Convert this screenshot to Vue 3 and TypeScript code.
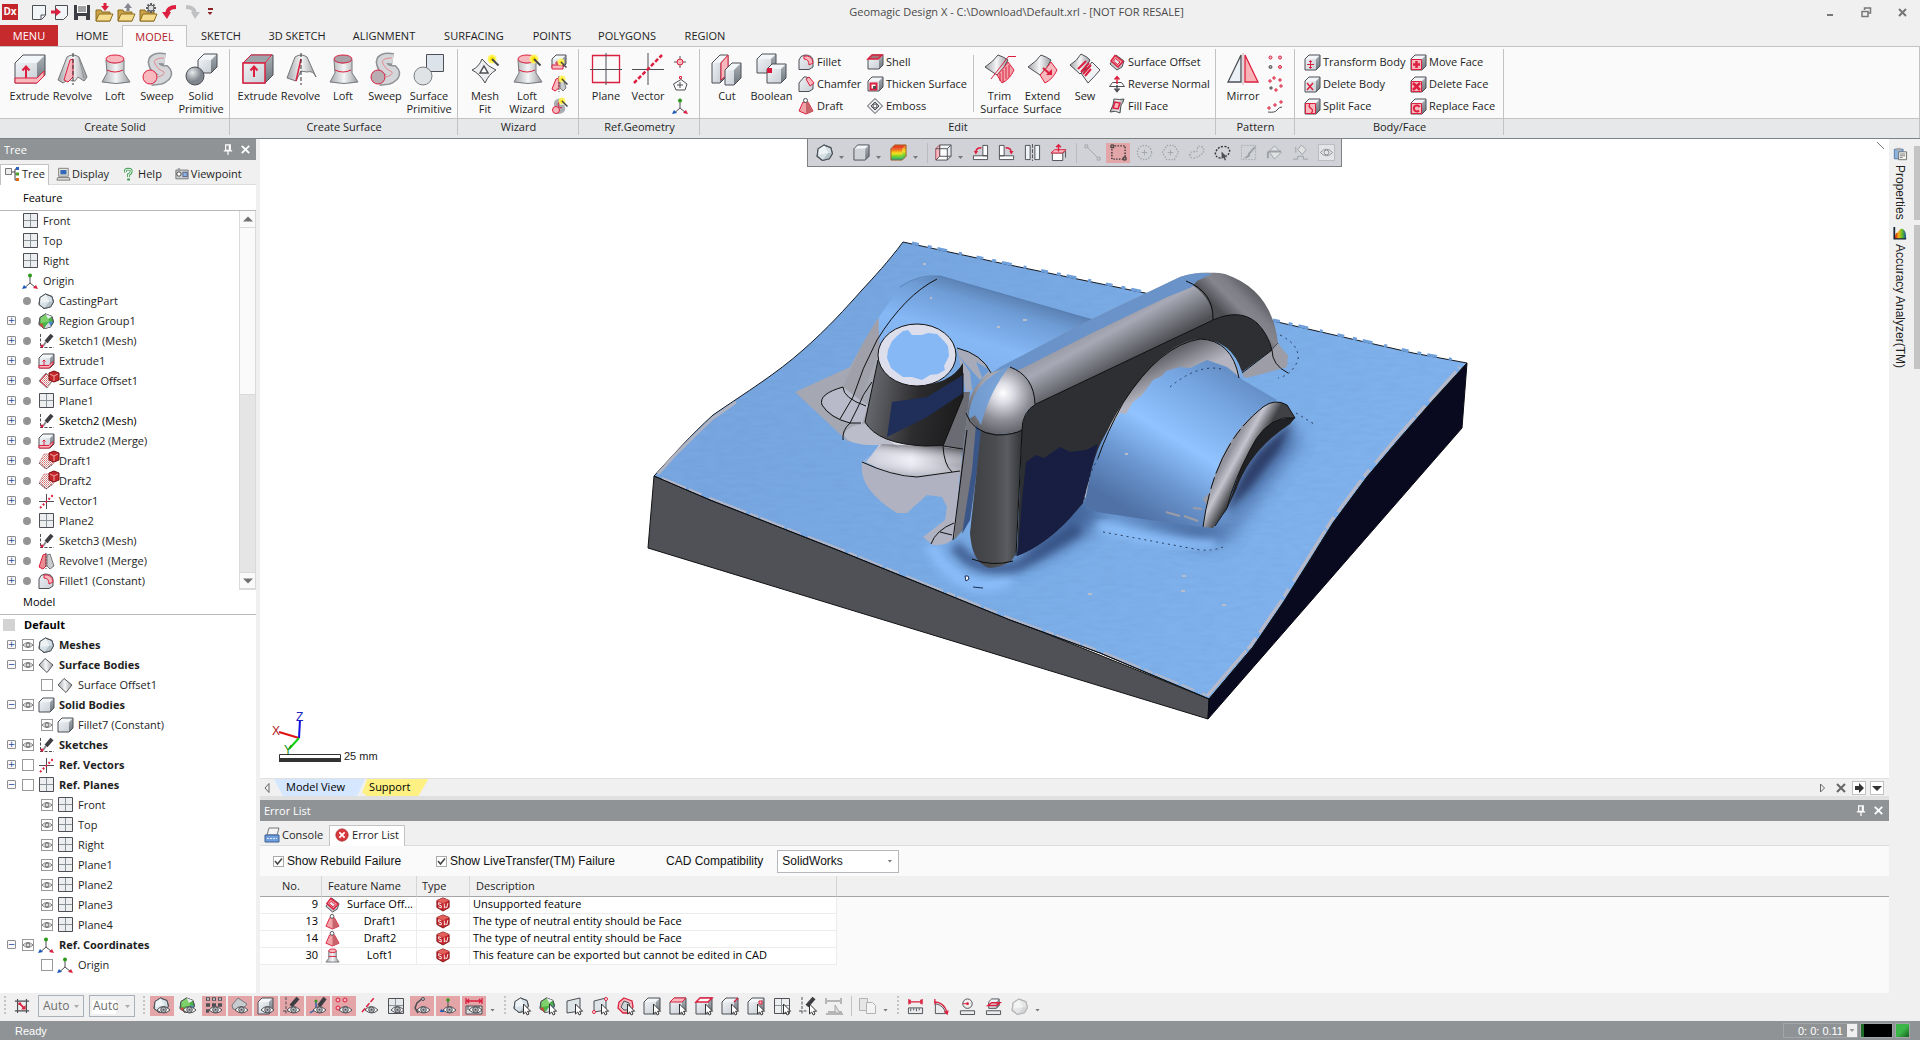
<script setup lang="ts">
import { h, ref } from 'vue'

const K = '#4d4f54'
const R = '#dc1f3f'
const P = '#f7b9bd'

const box = (x: number, y: number, w: number, t: number, d: number, front = 'url(#lt)', side = 'url(#sd)', st = K, top = '#f3f6f8') =>
  `<path d="M${x} ${y + d}l${d} ${-d}h${w}l${-d} ${d}z" fill="${top}"/><path d="M${x} ${y + d}h${w}v${t}h${-w}z" fill="${front}"/><path d="M${x + w} ${y + d}l${d} ${-d}v${t}l${-d} ${d}z" fill="${side}"/><path d="M${x} ${y + d}l${d} ${-d}h${w}v${t}l${-d} ${d}h${-w}z" fill="none" stroke="${st}"/>`
const line = (d: string, c = K, w = 1, extra = '') => `<path d="${d}" fill="none" stroke="${c}" stroke-width="${w}" ${extra}/>`
const fill = (d: string, f: string, c = 'none', w = 1) => `<path d="${d}" fill="${f}" stroke="${c}" stroke-width="${w}"/>`
const dot = (x: number, y: number, r: number, f: string, c = 'none') => `<circle cx="${x}" cy="${y}" r="${r}" fill="${f}" stroke="${c}"/>`

const wand = (x: number, y: number, r = 4.5) => `<circle cx="${x}" cy="${y}" r="${r}" fill="#fff45c" opacity=".9"/><circle cx="${x}" cy="${y}" r="${r - 2}" fill="#ffe600"/>` + line(`M${x} ${y}l${r + 2} ${r + 2}`, '#45464a', r > 4 ? 2 : 1.5)
const eye = fill('M4 13q6-7 13 0q-6 6-13 0z', '#fff', K) + dot(10.5, 12.7, 2.8, '#b5b8bc', K) + dot(10.5, 12.7, 1, K)
const cur = fill('M10.5 7v10l2.2-2 1.5 3 1.8-1-1.4-2.8h3z', '#fff', '#333', 1)
const poly16 = (a = '#eef4f6', b = '#d5e0e6', c = '#b3c0c8', st = '#50555b') =>
  fill('M7.5 1 14 3.5 15.5 9 12.5 14 6 15.5 1 11.5 2 4.5z', b, st, 1) + fill('M7.5 1 11.5 8.5 3 10 2 4.5z', a) + fill('M11.5 8.5 15.5 9 12.5 14 6 15.5z', c) + line('M7.5 1 14 3.5 15.5 9 12.5 14 6 15.5 1 11.5 2 4.5z', st)
const region = poly16('#7ed06a', '#4cb447', '#4a8ed6') + fill('M6 15.5 10.5 9.5 13 13.5z', '#d9dde0') + fill('M7.5 1 14 3.5 10 6z', '#eceff1') + fill('M1 11.5 4 10 6 15.5z', '#cf4a3c')
const planeS = fill('M1.5 1.5h14v14h-14z', '#eceef0', K) + line('M8.5 2v13M2 8.5h13', '#8a9299')
const pen = line('M14 2 8 9', '#3d3e42', 4) + line('M8 9 5 13', '#8a8c90', 2)
const sketch = line('M2.5 1v14M2 14.5h14', K, 1, 'stroke-dasharray="3 1.500"') + pen + dot(4, 13, 1.5, R)
const coord = line('M8 2.5V10', K) + line('M8 10 3 14.5M8 10l5.5 4.5', K) + dot(8, 2.5, 2, '#2e9a1c') + fill('M0 16l2-4 3 3z', '#1957b8') + fill('M16 16l-2-4-3 3z', R)
const swb = (x: number, y: number, s: number) => fill(`M${x} ${y + 2}l${s / 2} -2 ${s / 2} 2v${s - 3}l${-s / 2} 2 ${-s / 2} -2z`, '#c3262b', '#7d1013') + line(`M${x + 1} ${y + 3}l${s / 2 - 1} 2 ${s / 2 - 1} -2M${x + s / 2} ${y + 5}v${s - 5}`, '#f2a6a2', 1)
const diamond = (f = 'url(#mt)', st = '#56585c') => fill('M7 1.5 15 8 9 15.5 1 8z', f, st)
const revolve = (half: string) => fill('M10 4q6-4 12 0l8 20-3 4-6-4-3 4h-3l-3-2-6 4-5-3z', 'url(#mt)', '#777') + fill('M13 7 16 6v18l-5 5-4-2z', half, R) + line('M16 0v32', '#333', 1, 'stroke-dasharray="4 2"') + line('M22 5l5 20', '#8c8f93')
const loft = (f: string) => fill('M7 7q8 6 18 0l0 13 6 9q-14 3-28 0l5-9z', 'url(#mt)', '#77797d') + `<ellipse cx="16" cy="6" rx="9" ry="4" fill="${f}" stroke="${R}"/>` + line('M8 17q8 4 16 0', R)
const sweep = (f: string) => line('M24 6q-13-2-11 5t11 7q4 4-5 8l-9 1', '#8f9296', 12) + line('M24 6q-13-2-11 5t11 7q4 4-5 8l-9 1', '#d4d6d9', 9) + line('M23 5q-12 0-9 6t9 8q1 3-6 5', '#e58a93') + dot(9, 24, 7, f, R)
const cells = (body: string, f: string) => box(1, 1, 11, 11, 4, 'url(#lt)', 'url(#sd)', K) + (f ? fill('M1.5 5.5h10v10h-10z', f, R) : '') + body
const folder = fill('M1 7h5l1 2h8v9H1z', '#caa34a', '#8c6c1d') + fill('M1 18 4 11h14l-3 7z', '#f6dc8e', '#8c6c1d')

type Icon = [number, string]
const icons: Record<string, Icon> = {
  extrude: [32, box(1, 2, 22, 20, 8) + fill('M1 25h22l7-7v5l-7 7H1z', P, R) + line('M12 25V14M8.5 17.5 12 13.5l3.5 4', R, 2)],
  extrudeS: [32, box(1, 2, 22, 20, 8) + fill('M1 10 9 2h21l-7 8z', '#9da3a8', R) + fill('M1 10h22v20H1z', 'url(#lt)', R, 1.5) + line('M12 24V14M8.5 17.5 12 13.5l3.5 4', R, 2)],
  revolve: [32, revolve(P)],
  revolveS: [32, fill('M10 4q6-4 12 0l9 20q-3-7-9-5l-6-1-5 10-9-3z', 'url(#mt)', '#777') + line('M16 6 11 28', R, 1.5) + line('M16 0v32', '#333', 1, 'stroke-dasharray="4 2"')],
  loft: [32, loft(P)],
  loftS: [32, loft('#a9a2a6')],
  loftW: [32, loft(P) + wand(23, 6)],
  sweep: [32, sweep(P)],
  sweepS: [32, sweep('#b9adb1')],
  solidPrim: [32, box(13, 1, 13, 13, 6) + dot(10, 23, 9, 'url(#ball)', K)],
  surfPrim: [32, fill('M13.5 1.5h17v17h-17z', '#dde3ea', K) + dot(10, 23, 9, '#dfe3e6', '#7b7d80')],
  meshFit: [32, fill('M3 17q7-3 10-11 6 8 14 11-7 4-11 13-5-9-13-13z', '#eceef0', K) + fill('M15 13l4 7h-8z', '#fff', K, 1.5) + wand(23, 6)],
  plane: [32, line('M2.5 2.5h27v27h-27z', R, 1.3) + line('M16 0v32M0 16.5h32', K)],
  vector: [32, line('M16 0v32M0 16.5h32', K) + line('M2 30 30 2', R, 2.5, 'stroke-dasharray="4 2"')],
  cut: [32, box(1, 2, 8, 20, 8) + fill('M10 10l7-8v19l-7 6z', P, R) + box(14, 10, 9, 15, 7)],
  boolean: [32, box(1, 1, 14, 14, 5) + box(11, 11, 14, 14, 5) + fill('M11 15h5v5h-5z', '#d9173a')],
  trim: [32, fill('M1 14Q10 8 14 2q6 2 10 5-3 8-11 15z', 'url(#mt)', K) + fill('M13 22Q20 15 24 9l6 8q-4 9-12 13z', '#f3a1a8', R) + line('M16 20v8M19 17v12M22 14v12M25 12v12', R) + line('M7 26 24 4M24 3.5h8', R)],
  extend: [32, fill('M1 14Q10 8 14 2q6 2 10 5-3 8-11 15z', 'url(#mt)', K) + fill('M13 22Q20 15 24 9l6 8q-4 9-12 13z', P, R) + line('M16 15l7 6', R, 2) + fill('M25 22v-6l-6 6z', R)],
  sew: [32, fill('M1 12Q8 8 12 1q7 3 9 6-3 9-10 14z', 'url(#mt)', K) + fill('M12 20Q20 15 23 9l8 8q-5 6-12 13z', '#f1f2f4', K) + line('M9 16l8-8M12 19l8-9M14 21l8-9M16 23l6-7', R, 2)],
  mirror: [32, fill('M14 2v27H1z', '#eaf2f8', K, 1.3) + fill('M18 2v27h13z', '#f7b3b6', R, 1.3) + line('M16 0v32', '#c7adb0')],
  wiz1: [16, box(1, 1, 10, 9, 4) + fill('M1 11h11v4H1z', P, R) + line('M6 11V7M4 9h4', R) + wand(10, 8, 3.5)],
  wiz2: [16, fill('M5 3 8 2v10l-4 3-3-2z', P, R) + fill('M9 3l3-1 3 10-3 3-3-3z', '#c9cccf', '#777') + line('M8 0v16', '#555', 1, 'stroke-dasharray="2 1"') + wand(11, 3, 3.5)],
  wiz3: [16, line('M12 3Q5 3 6 7t5 3q1 3-5 3', '#a9acb0', 6) + line('M11 3Q6 4 7 7t4 3', R) + dot(5, 12, 3.5, P, R) + wand(11, 3, 3.5)],
  point: [16, line('M8 2v12M2 8h12', K) + dot(8, 8, 3, P, R)],
  polyPt: [16, fill('M9 3.5 15 8l-2 6H4L1.5 8z', 'none', K) + line('M8 6v6M5 9h6', K) + fill('M7.5.5h2v2h-2z', '#fff', R)],
  coord: [16, coord],
  fillet: [16, fill('M1 6Q2 1.5 7 1q8 0 8 6v6l-4 2.5H1z', 'url(#lt)', K) + fill('M6 2q8-1 9 7l-4 2q0-6-5-6z', P, R)],
  chamfer: [16, fill('M1 7 6 1h3l6 6v6l-4 2.5H1z', 'url(#lt)', K) + fill('M8 3l3-2 5 6-4 3z', P, R)],
  draft: [16, fill('M5 4h5l5 9-7 3-7-3z', '#f0a4a8', R) + fill('M8 5l2-1 5 9-7 3z', '#c9636a') + dot(7.5, 2.5, 2, '#fff', K)],
  shell: [16, box(1, 1, 11, 10, 4) + fill('M1 5l4-4h10l-4 4z', '#a0747a', R, 1.5)],
  thicken: [16, box(1, 1, 11, 10, 4) + fill('M3.5 7.5h6v6h-6z', '#fff', R, 2) + fill('M6 10h3v3h-3z', K)],
  emboss: [16, fill('M8 .5 15.5 8 8 15.5.5 8z', '#eceeef', K) + fill('M8 4l4 4-4 4-4-4z', '#d5d8da', K) + dot(8, 8, 2, '#fff', K)],
  soffset: [16, fill('M7 1l8 6-2 6-5 3-7-6z', '#c6c8cc', K) + fill('M6 1.5 14 7.5 9 13 2 7z', '#f2a7ad', R, 1.5) + fill('M6.5 4.5 11 8 8.5 10.5 4.5 7z', '#e4e5e7', R)],
  reverse: [16, fill('M3.5 6.5h9l3 4H.5z', '#fff', K) + line('M8 8V1M5.5 3.5 8 .7l2.5 2.8', R, 1.5) + line('M8 9v6M5.5 12.5 8 15.5l2.5-3', K, 1.5)],
  fillFace: [16, fill('M5 1q6 1 10 0-1 4-3 6l-1 8Q7 12 1 14L4 7z', 'url(#mt)', K) + fill('M6 4l5 1-2 6-5-1z', P, R, 1.5)],
  pat1: [16, dot(3.5, 3.5, 1.5, P, R) + dot(13, 3.5, 1.5, P, R) + dot(3.5, 13, 1.5, '#aaa', K) + dot(13, 13, 1.5, P, R)],
  pat2: [16, dot(3, 5, 1.2, P, R) + dot(7, 2, 1.2, P, R) + dot(13, 4, 1.2, P, R) + dot(4, 12, 1.2, '#aaa', K) + dot(14, 10, 1.2, P, R) + dot(9, 14, 1.2, P, R)],
  pat3: [16, line('M1 14q7 1 9-2t5-3', K) + dot(2, 10, 1.2, P, R) + dot(8, 7, 1.2, P, R) + dot(14, 4, 1.2, P, R)],
  tbody: [16, cells(line('M6.5 7v7M3 10.5h7M5 8l1.5-1.5L8 8M5 13l1.5 1.5L8 13', R), '')],
  dbody: [16, cells(line('M3 7l6 7M9 7l-6 7', R, 1.5), '')],
  sface: [16, cells(line('M6 5.5q-2 3 1 5t0 5', R, 1.3), P)],
  mface: [16, cells(line('M6.5 7v7M3 10.5h7', R, 2.5), P)],
  dface: [16, cells(line('M3 7l7 7M10 7l-7 7', R, 2.5), P)],
  rface: [16, cells(line('M9 12.5A3 3 0 1 1 9.5 9', R, 2), P)],
  mesh: [16, poly16()],
  region: [16, region],
  sketch: [16, sketch],
  ext16: [16, box(1, 1, 11, 10, 4) + fill('M1 12.5h10l4-4V11l-4 4H1z', P, R) + line('M6 12V7M4.5 8.5 6 7l1.5 1.5', R)],
  surfx: [22, fill('M8 3l7 7-6 8-8-7z', 'url(#dither)', '#888', 1) + line('M8 4 2 11l7 6', R) + swb(11, 1, 10)],
  draftx: [22, fill('M6 4h5l5 9-8 6-7-6z', 'url(#dither)', '#e1a1a5', 1) + line('M1 13l7 6 7-5', K, 1, 'stroke-dasharray="2 1"') + swb(11, 1, 10)],
  planeS: [17, planeS],
  vecS: [16, line('M8.5 1v15M1 8.5h15', K) + line('M2 15 15 2', R, 2, 'stroke-dasharray="2 2"')],
  rev16: [16, fill('M5 2 8 1v12l-3 3-4-2z', '#e98d92', R) + fill('M9 2l3-1 4 12-4 3-3-3z', '#c9cccf', '#777') + line('M8 0v16', '#555', 1, 'stroke-dasharray="2 1"')],
  surf: [16, diamond()],
  solid: [16, box(1, 1, 11, 10, 4)],
  loft16: [16, fill('M4 3h8v8l3 4H1l3-4z', 'url(#mt)', '#77797d') + `<ellipse cx="8" cy="3" rx="4" ry="2" fill="${P}" stroke="${R}"/>` + line('M4 9h8', R)],
  sw: [16, fill('M1 4 8 1l7 3v8l-7 4-7-4z', '#c3262b', '#7d1013') + fill('M1 4 8 1l7 3-7 3z', '#e2605c') + line('M6 7.5 3 6.5V9l3 1v2.5l-3-1M9.5 7.5v5l1.5-1 1.5.5 1-5', '#fff', 1)],
  error: [16, dot(8, 8, 7, '#d8383b', '#a82a2d') + line('M5 5l6 6M11 5l-6 6', '#fff', 2)],
  console: [16, fill('M3 8 5 1h10l-2 7z', '#f2f4f6', '#777') + fill('M1 8h14v7H1z', '#6f9fdc', '#3c5f96') + line('M3 11.5h10', '#dfe9f7', 1, 'stroke-dasharray="2 1"')],
  treeTab: [16, fill('M1.5 2.5h6v6h-6z', '#eee', '#777') + line('M8 6h3M13 3h-2v11h2M11 8h2', '#444') + fill('M12 1h3v3h-3z', '#2e62c0') + fill('M12 6.5h3v3h-3z', '#49a32a') + fill('M12 12h3v3h-3z', '#dc6a15')],
  display: [16, fill('M3 1.5h11v9H3z', '#e7e5dc', '#777') + fill('M5 3.5h7v5H5z', '#3168b8') + fill('M2 12h13l1 3H1z', '#d8d8d2', '#777')],
  help: [16, line('M4 6Q3 2.500 7 2.500T10.500 5Q10.500 7 7.500 8.500v3M7.500 13v2.500', '#3f9a52', 3.2) + line('M4 6Q3 2.500 7 2.500T10.500 5Q10.500 7 7.500 8.500v3', '#e2f5e4', 1.2)],
  view: [16, fill('M1 3.5h14v10H1z', '#cfd0d2', '#6d6e70') + dot(4.5, 8, 2.5, '#fff', '#333') + fill('M9 6h5v5H9z', '#86b2e4', '#557') + fill('M3 1.5h3v2H3z', '#999')],
  solidv: [18, box(1, 1, 12, 12, 4, '#cfd2d6')],
  heat: [18, box(1, 1, 12, 12, 4, 'url(#heat)', 'url(#heat)', '#a55c1c', '#e8441f')],
  wire: [18, box(1, 1, 12, 12, 4, '#fff', '#e9ecef') + fill('M1 5l4-4v12l-4 4z', P, R, 0.5) + line('M5 1v12h12M5 13l-4 4M1 5h12v12M13 5l4-4', K)],
  rotL: [18, fill('M11.5 1.5h5v11h-5zM1.5 12.5h15v4h-15z', '#fff', K) + line('M10 4Q4 4 4 9', R, 1.5) + fill('M2 7.5h4.500L4 11z', R)],
  rotR: [18, fill('M1.5 1.5h5v11h-5zM1.5 12.5h15v4h-15z', '#fff', K) + line('M8 4q6 0 6 5', R, 1.5) + fill('M12 7.5h4.500L14 11z', R)],
  flip: [18, fill('M1.5 1.5h5v15h-5zM11.5 1.5h5v15h-5z', '#eef4f8', K) + line('M9 0v18', K, 1, 'stroke-dasharray="4 1.500"')],
  normal: [18, fill('M2.5 9.5h11v8h-11z', '#fff', K) + line('M13.500 9.500l3-2v7', K) + fill('M1 9.500 5 6h12l-4 3.500z', P, R) + line('M9 8V1M6.5 3.5 9 .8l2.5 2.7', R, 1.5)],
  gline: [18, line('M2 2l14 14', '#a2a6a9') + fill('M1 1h3v3H1zM14 14h3v3h-3z', '#d0d3d7', '#a2a6a9')],
  rsel: [18, line('M2 2h14v14H2z', '#333', 1.5, 'stroke-dasharray="1.500 1.500"') + fill('M1 1h3v3H1zM14 14h3v3h-3z', '#a88', '#333')],
  gcirc: [18, `<circle cx="9" cy="9" r="7.500" fill="none" stroke="#a2a6a9" stroke-width="1.500" stroke-dasharray="1.500 1.500"/>` + line('M9 6v6M6 9h6', '#a2a6a9')],
  ghex: [18, line('M5 1.5h8l4.5 7.5-4.5 7.5H5L.5 9z', '#a2a6a9', 1.5, 'stroke-dasharray="1.500 1.500"') + line('M9 6v6M6 9h6', '#a2a6a9')],
  gfree: [18, line('M2 12q0-4 4-4 4 1 4-3t5-2q4 4-1 8-3 3-8 4-4 0-4-3z', '#a2a6a9', 1.5, 'stroke-dasharray="1.500 1.500"')],
  lasso: [18, line('M7 15Q1 14 1.5 9 4 3 10 2.5q7 0 6.5 6-1 3-4 4', '#333', 1.5, 'stroke-dasharray="2 1.500"') + fill('M8 8v8l2-1.5 1.5 3 1.3-.6-1.3-2.9H14z', K)],
  gbrush: [18, line('M1.5 1.5h15v15h-15z', '#a2a6a9', 1, 'stroke-dasharray="1.500 1.500"') + line('M16 3l-7 8', '#9da1a5', 2) + fill('M9 10l2 2q-2 4-8 3 4-1 6-5z', '#9da1a5')],
  gbucket: [18, fill('M3 8l6-6 7 7-7 7z', '#dfe1e3', '#9da1a5') + line('M2 8v7M3 8h13', '#9da1a5', 2)],
  gsmart: [18, fill('M6 6l4-5 5 5-4 5z', '#dfe1e3', '#9da1a5') + line('M1 16h5v-3h6v3h5M4 3v6', '#9da1a5')],
  geye: [18, fill('M.5.5h17v17H.5z', '#e3e4e6', '#b7babd') + line('M2.5 9q6.5-7 13 0-6.5 7-13 0z', '#8d9195') + dot(9, 9, 2.5, 'none', '#8d9195')],
  crop: [18, line('M4 1v16M14 1v16M1 3.5h16M1 14.5h16', K, 1.3) + line('M6 6l6 6', R, 2) + fill('M13 13V8l-5 5zM5 5h3v3H5z', R)],
  eMesh: [18, poly16() + eye], eRegion: [18, region + eye],
  eCloud: [18, line('M1 2h4M7 2h4M13 2h4M1 8h4M7 8h4M13 8h4M1 14h3', K, 3.5) + line('M2 2h2M8 2h2M14 2h2', '#ddd', 1.5) + eye],
  eSurf: [18, fill('M7 1 16 7l-5 6-9-1-1-4z', '#c8ccd0', '#77797d') + eye],
  eSolid: [18, box(1, 1, 11, 12, 4) + eye],
  eSketch: [18, line('M3 0v18M0 14h8', K, 1, 'stroke-dasharray="3 1.500"') + line('M15 1 8 9', '#3d3e42', 4) + eye],
  eSk3: [18, line('M7 3v9L1 16', '#2b62ad', 1.5) + line('M16 1l-6 8', '#3d3e42', 4) + dot(7, 4, 1.5, '#2e9a1c') + eye],
  ePts: [18, dot(3, 3, 2, P, R) + dot(10, 3, 2, P, R) + dot(3, 11, 2, P, R) + eye],
  eVec: [18, line('M1 15 13 1', R, 1.5, 'stroke-dasharray="5 1.500"') + eye],
  ePlane: [18, fill('M1.5 1.5h15v15h-15z', '#e6e9eb', K) + line('M8.5 2v14M2 8.5h14', '#8a9299') + eye],
  eCurve: [18, line('M10 1 4 6l-2 5 3 5', K, 1.5) + dot(10, 2, 1.5, '#ccc', K) + eye],
  eCoord: [18, line('M9 3v9', K) + dot(9, 3, 1.8, '#2e9a1c') + fill('M1 15l1-3 4 3z', '#1957b8') + eye],
  eDim: [18, line('M1 1v6M17 1v6M1 4h16M4 2 2 4l2 2M14 2l2 2-2 2', R, 1.3) + fill('M1 9h16v8H1z', '#ddd', K) + line('M3 9v4M14 9v4', K) + eye],
  cMesh: [18, poly16() + cur], cRegion: [18, region + cur],
  cFace: [18, fill('M2 4 15 1v13L2 16z', '#dde4e8', K) + cur],
  cEdge: [18, fill('M3 4 15 1v12L3 15z', '#dde4e8', K) + dot(15, 2, 1.5, '#fff', R) + dot(3, 15, 1.5, '#fff', R) + cur],
  cBound: [18, fill('M7 1 15 4l1 6-3 6H6l-5-5 1-6z', P, R, 1.3) + fill('M7 4l5 2 1 4-2 3H7l-3-3z', '#cfd6da', K) + cur],
  cBody: [18, box(1, 1, 12, 12, 4) + cur],
  cTop: [18, box(1, 1, 12, 12, 4) + fill('M1 5l4-4h12l-4 4z', P, R) + cur],
  cLoop: [18, box(1, 1, 12, 12, 4) + fill('M1 5l4-4h12l-4 4z', '#fff', R, 1.5) + cur],
  cLine: [18, box(1, 1, 12, 12, 4) + line('M13 5l4-4', R, 1.5) + cur],
  cVert: [18, box(1, 1, 12, 12, 4) + fill('M12 4h3v3h-3z', P, R) + cur],
  cPlane: [18, fill('M1.5 1.5h15v15h-15z', '#eceeef', K) + line('M8.5 2v14M2 8.5h14', '#8a9299') + cur],
  cSketch: [18, line('M3 0v18M0 14h8', K, 1, 'stroke-dasharray="3 1.500"') + line('M15 1 8 9', '#3d3e42', 4) + cur],
  cDim: [18, line('M1 1v6M16 1v6M1 4h15M1 17h17M3 15h14', '#b4b6b8', 2) + fill('M10 8v8h5z', '#ddd', '#aaa')],
  copy: [18, fill('M1.5 1.5h8v12h-8z', '#e6e6e6', '#b0b2b4') + fill('M8.5 5.5h6l3 3v8h-9z', '#f3f3f3', '#b0b2b4')],
  mDist: [18, line('M2 1v6M16 1v6M2 4h14M4 2 2 4l2 2M14 2l2 2-2 2', R, 1.3) + fill('M1.5 10.5h15v6h-15z', '#e9ebec', K) + line('M4 11v3M7 11v2M10 11v3M13 11v2', K)],
  mAng: [18, fill('M2.5 6v10.5h11Q12 8 2.5 6z', '#e9ebec', K) + line('M2 1v6M1 4q11 0 14 12M12 14l3 3 1-4', R, 1.3)],
  mRad: [18, dot(9, 6, 5, '#eee', K) + dot(9, 6, 1.5, R) + line('M9 6H4', R) + fill('M1.5 13.5h15v4h-15z', '#e9ebec', K)],
  mSec: [18, box(4, 1, 8, 7, 3) + line('M3 8l4-3h9l-4 3z', R, 1.5) + fill('M1.5 13.5h15v4h-15z', '#e9ebec', K)],
  gMesh: [16, poly16('#f2f3f3', '#e5e6e7', '#d4d6d7', '#b5b7b9')],
  props: [16, fill('M1.5 2.5h10v11h-10z', '#8fb2da', '#4f75a5') + fill('M4 1h5v3H4z', '#aaa') + fill('M6.5 5.5h9v9h-9z', '#f5f5f0', '#666') + line('M8 8h6M8 10h6M8 12h3', '#777')],
  accuracy: [16, line('M1.5 1v13.5H15', '#123', 2) + fill('M2 14Q3 6 5 8 9 1 12 4q3 2 3 10z', 'url(#rain)')],
  newDoc: [18, fill('M3.5 2.5h13v10l-4 4h-9z', '#f2f5f8', K) + line('M16 12h-4v4', K)],
  import: [18, fill('M4.5 2.5h12v10l-4 4h-8z', '#f2f5f8', K) + line('M0 9h6', R, 3) + fill('M5 5l5 4-5 4z', R)],
  save: [18, fill('M1 2h16v15H1z', '#3c3e43') + fill('M4 2h10v8H4z', '#fff') + line('M5 4h8M5 6h8M5 8h8', '#444') + fill('M5 13h8v4H5z', '#e9e9e9')],
  open1: [18, folder + line('M10 0v4', R, 3) + fill('M6 3h8l-4 5z', R)],
  open2: [18, folder + line('M11 8V4', '#85898d', 3) + fill('M7 5h8l-4-5z', '#85898d')],
  open3: [18, folder + line('M12 0v10M7 5h10M8.5 1.5l7 7M15.5 1.5l-7 7', '#5b5e63', 2) + dot(12, 5, 3, '#ddd', '#5b5e63')],
  undo: [18, line('M6 10Q7 4 15 4', R, 4) + fill('M1 9h9l-4 7z', R)],
  redo: [18, line('M12 10Q11 4 3 4', '#bfc1c2', 4) + fill('M17 9H8l4 7z', '#bfc1c2')],
  pin: [14, line('M5 2h5v6H5zM3 8.5h9M7.5 9v4M9 2v6', 'currentColor', 1.3)],
  close: [14, line('M3 3l8 8M11 3l-8 8', 'currentColor', 2)],
}

const Ico = (p: { n: string; w?: number | string }) => {
  const [s, body] = icons[p.n]
  const w = p.w ?? s
  return h('svg', { class: 'ico', viewBox: `0 0 ${s} ${s}`, width: w, height: w, 'aria-hidden': 'true', innerHTML: body })
}
Ico.props = ['n', 'w']

const quick = ['newDoc', 'import', 'save', 'open1', 'open2', 'open3', 'undo', 'redo']
const tabs: [string, number][] = [['HOME', 60], ['MODEL', 65], ['SKETCH', 68], ['3D SKETCH', 84], ['ALIGNMENT', 90], ['SURFACING', 90], ['POINTS', 66], ['POLYGONS', 84], ['REGION', 72]]

type Part = { big: [string, string, number][] } | { col: [string, string][]; w: number } | { sep: true }
const groups: { name: string; w: number; parts: Part[] }[] = [
  { name: 'Create Solid', w: 230, parts: [{ big: [['extrude', 'Extrude', 43], ['revolve', 'Revolve', 43], ['loft', 'Loft', 42], ['sweep', 'Sweep', 42], ['solidPrim', 'Solid\nPrimitive', 46]] }] },
  { name: 'Create Surface', w: 228, parts: [{ big: [['extrudeS', 'Extrude', 43], ['revolveS', 'Revolve', 43], ['loftS', 'Loft', 42], ['sweepS', 'Sweep', 42], ['surfPrim', 'Surface\nPrimitive', 46]] }] },
  { name: 'Wizard', w: 121, parts: [{ big: [['meshFit', 'Mesh\nFit', 42], ['loftW', 'Loft\nWizard', 42]] }, { col: [['wiz1', ''], ['wiz2', ''], ['wiz3', '']], w: 20 }] },
  { name: 'Ref.Geometry', w: 121, parts: [{ big: [['plane', 'Plane', 42], ['vector', 'Vector', 42]] }, { col: [['point', ''], ['polyPt', ''], ['coord', '']], w: 20 }] },
  { name: 'Edit', w: 516, parts: [{ big: [['cut', 'Cut', 42], ['boolean', 'Boolean', 47]] }, { col: [['fillet', 'Fillet'], ['chamfer', 'Chamfer'], ['draft', 'Draft']], w: 69 }, { col: [['shell', 'Shell'], ['thicken', 'Thicken Surface'], ['emboss', 'Emboss']], w: 108 }, { sep: true }, { big: [['trim', 'Trim\nSurface', 43], ['extend', 'Extend\nSurface', 43], ['sew', 'Sew', 42]] }, { col: [['soffset', 'Surface Offset'], ['reverse', 'Reverse Normal'], ['fillFace', 'Fill Face']], w: 106 }] },
  { name: 'Pattern', w: 79, parts: [{ big: [['mirror', 'Mirror', 42]] }, { col: [['pat1', ''], ['pat2', ''], ['pat3', '']], w: 20 }] },
  { name: 'Body/Face', w: 209, parts: [{ col: [['tbody', 'Transform Body'], ['dbody', 'Delete Body'], ['sface', 'Split Face']], w: 106 }, { col: [['mface', 'Move Face'], ['dface', 'Delete Face'], ['rface', 'Replace Face']], w: 92 }] },
]

const sideTabs: [string, string][] = [['treeTab', 'Tree'], ['display', 'Display'], ['help', 'Help'], ['view', 'Viewpoint']]
type Row = { t: string; i: string; x?: '+' | '-'; root?: boolean; dark?: boolean }
const features: Row[] = [
  { t: 'Front', i: 'planeS', root: true }, { t: 'Top', i: 'planeS', root: true }, { t: 'Right', i: 'planeS', root: true }, { t: 'Origin', i: 'coord', root: true },
  { t: 'CastingPart', i: 'mesh' }, { t: 'Region Group1', i: 'region', x: '+' }, { t: 'Sketch1 (Mesh)', i: 'sketch', x: '+' }, { t: 'Extrude1', i: 'ext16', x: '+' },
  { t: 'Surface Offset1', i: 'surfx', x: '+' }, { t: 'Plane1', i: 'planeS', x: '+' }, { t: 'Sketch2 (Mesh)', i: 'sketch', x: '+', dark: true }, { t: 'Extrude2 (Merge)', i: 'ext16', x: '+' },
  { t: 'Draft1', i: 'draftx', x: '+' }, { t: 'Draft2', i: 'draftx', x: '+' }, { t: 'Vector1', i: 'vecS', x: '+' }, { t: 'Plane2', i: 'planeS' },
  { t: 'Sketch3 (Mesh)', i: 'sketch', x: '+' }, { t: 'Revolve1 (Merge)', i: 'rev16', x: '+' }, { t: 'Fillet1 (Constant)', i: 'fillet', x: '+' },
]
type MRow = { t: string; i: string; x?: '+' | '-'; on: boolean; sub?: boolean }
const model = ref<MRow[]>([
  { t: 'Meshes', i: 'mesh', x: '+', on: true }, { t: 'Surface Bodies', i: 'surf', x: '-', on: true }, { t: 'Surface Offset1', i: 'surf', on: false, sub: true },
  { t: 'Solid Bodies', i: 'solid', x: '-', on: true }, { t: 'Fillet7 (Constant)', i: 'solid', on: true, sub: true }, { t: 'Sketches', i: 'sketch', x: '+', on: true },
  { t: 'Ref. Vectors', i: 'vecS', x: '+', on: false }, { t: 'Ref. Planes', i: 'planeS', x: '-', on: false },
  ...['Front', 'Top', 'Right', 'Plane1', 'Plane2', 'Plane3', 'Plane4'].map((t) => ({ t, i: 'planeS', on: true, sub: true })),
  { t: 'Ref. Coordinates', i: 'coord', x: '-', on: true }, { t: 'Origin', i: 'coord', on: false, sub: true },
])
const viewTools = ['mesh', '>', 'solidv', '>', 'heat', '>', '|', 'wire', '>', 'rotL', 'rotR', 'flip', 'normal', '|', 'gline', 'rsel', 'gcirc', 'ghex', 'gfree', 'lasso', 'gbrush', 'gbucket', 'gsmart', 'geye']
const errors: [number, string, string, string][] = [
  [9, 'soffset', 'Surface Off...', 'Unsupported feature'],
  [13, 'draft', 'Draft1', 'The type of neutral entity should be Face'],
  [14, 'draft', 'Draft2', 'The type of neutral entity should be Face'],
  [30, 'loft16', 'Loft1', 'This feature can be exported but cannot be edited in CAD'],
]
const showTools = ['eMesh', 'eRegion', 'eCloud', 'eSurf', 'eSolid', 'eSketch', 'eSk3', 'ePts', 'eVec', 'ePlane', 'eCurve', 'eCoord', 'eDim']
const plain = ['eRegion', 'eVec', 'ePlane']
const pickTools = ['cMesh', 'cRegion', 'cFace', 'cEdge', 'cBound', 'cBody', 'cTop', 'cLoop', 'cLine', 'cVert', 'cPlane', 'cSketch', 'cDim']
const measure = ['mDist', 'mAng', 'mRad', 'mSec', 'gMesh']
const rebuild = ref(true)
const live = ref(true)
</script>

<template>
  <div class="app">
    <svg class="defs" width="0" height="0" aria-hidden="true">
      <defs>
        <linearGradient id="lt" x2="1" y2="1"><stop offset="0" stop-color="#eef1f4" /><stop offset="1" stop-color="#c9cfd6" /></linearGradient>
        <linearGradient id="sd" x2="0" y2="1"><stop offset="0" stop-color="#aab1b7" /><stop offset="1" stop-color="#6d757c" /></linearGradient>
        <linearGradient id="mt"><stop offset="0" stop-color="#a5a8ac" /><stop offset=".5" stop-color="#f4f5f6" /><stop offset="1" stop-color="#9a9da1" /></linearGradient>
        <radialGradient id="ball" cx=".35" cy=".3"><stop offset="0" stop-color="#e6eaed" /><stop offset="1" stop-color="#7f868d" /></radialGradient>
        <linearGradient id="heat" x2="0" y2="1"><stop offset="0" stop-color="#f0541e" /><stop offset=".4" stop-color="#f7e21e" /><stop offset=".7" stop-color="#6fd02a" /><stop offset="1" stop-color="#19a39c" /></linearGradient>
        <linearGradient id="rain"><stop offset="0" stop-color="#c01515" /><stop offset=".35" stop-color="#f5b314" /><stop offset=".65" stop-color="#5fc02a" /><stop offset="1" stop-color="#164f9a" /></linearGradient>
        <pattern id="dither" width="2" height="2" patternUnits="userSpaceOnUse"><rect width="2" height="2" fill="#fff" /><rect width="1" height="1" fill="#d66" /><rect x="1" y="1" width="1" height="1" fill="#c9a0a0" /></pattern>
      </defs>
    </svg>

    <header class="titlebar">
      <span class="logo">Dx</span>
      <button v-for="q in quick" :key="q" class="flat" :aria-label="q"><Ico :n="q" /></button>
      <button class="flat more" aria-label="Customize"><i></i><b></b></button>
      <h1>Geomagic Design X - C:\Download\Default.xrl - [NOT FOR RESALE]</h1>
      <div class="winctl">
        <button class="flat" aria-label="Minimize"><svg width="12" height="12"><path d="M3 9h6" stroke="#777" stroke-width="2" /></svg></button>
        <button class="flat" aria-label="Restore"><svg width="12" height="12"><path d="M4.500 4V2h6v5H8M2 5.500h6v5H2z" fill="none" stroke="#777" stroke-width="1.500" /></svg></button>
        <button class="flat" aria-label="Close"><svg width="12" height="12"><path d="M3 3l7 7M10 3l-7 7" stroke="#777" stroke-width="2" /></svg></button>
      </div>
    </header>

    <nav class="tabs">
      <button class="menu">MENU</button>
      <button v-for="[t, w] in tabs" :key="t" :class="{ cur: t === 'MODEL' }" :style="{ width: w + 'px' }">{{ t }}</button>
    </nav>

    <section class="ribbon">
      <div v-for="g in groups" :key="g.name" class="group" :style="{ width: g.w + 'px' }">
        <div class="tools">
          <template v-for="(p, pi) in g.parts" :key="pi">
            <template v-if="'big' in p">
              <button v-for="b in p.big" :key="b[0]" class="big" :style="{ width: b[2] + 'px' }"><Ico :n="b[0]" /><span>{{ b[1] }}</span></button>
            </template>
            <div v-else-if="'col' in p" class="col" :style="{ width: p.w + 'px' }">
              <button v-for="b in p.col" :key="b[0]" class="small" :aria-label="b[1] || b[0]"><Ico :n="b[0]" /><span v-if="b[1]">{{ b[1] }}</span></button>
            </div>
            <i v-else class="rsep"></i>
          </template>
        </div>
        <div class="gname">{{ g.name }}</div>
      </div>
      <div class="group rest"><div class="tools"></div><div class="gname"></div></div>
    </section>

    <div class="work">
      <aside class="side">
        <div class="phead"><span>Tree</span><button class="flat" aria-label="Pin"><Ico n="pin" w="13" /></button><button class="flat" aria-label="Close panel"><Ico n="close" w="13" /></button></div>
        <div class="ptabs">
          <button v-for="[i, t] in sideTabs" :key="t" :class="{ cur: t === 'Tree' }"><Ico :n="i" :w="t === 'Tree' ? 16 : 14" />{{ t }}</button>
        </div>
        <div class="sect">Feature</div>
        <div class="ftree">
          <ul>
            <li v-for="f in features" :key="f.t" :class="{ root: f.root, dark: f.dark }">
              <template v-if="!f.root"><button v-if="f.x" class="exp" aria-label="Expand">{{ f.x }}</button><i v-else class="noexp"></i><i class="bul"></i></template>
              <span class="slot"><Ico :n="f.i" /></span>{{ f.t }}
            </li>
          </ul>
          <div class="scroll">
            <button aria-label="Scroll up"><svg width="10" height="6"><path d="M0 5.500 5 .5l5 5z" fill="#707070" /></svg></button>
            <i class="thumb"></i>
            <button class="down" aria-label="Scroll down"><svg width="10" height="6"><path d="M0 .5h10l-5 5z" fill="#707070" /></svg></button>
          </div>
        </div>
        <div class="sect short">Model</div>
        <ul class="mtree">
          <li class="def"><i></i>Default</li>
          <li v-for="(m, k) in model" :key="k" :class="{ sub: m.sub }">
            <button v-if="m.x" class="exp" aria-label="Expand">{{ m.x === '-' ? '−' : '+' }}</button>
            <label><span class="vis"><input v-model="m.on" type="checkbox" /><svg v-if="m.on" width="12" height="12" viewBox="0 0 12 12"><path d="M1 6q5-5 10 0-5 5-10 0z" fill="#fff" stroke="#777" /><circle cx="6" cy="6" r="2" fill="#ddd" stroke="#666" /></svg></span><span class="slot"><Ico :n="m.i" /></span>{{ m.t }}</label>
          </li>
        </ul>
      </aside>

      <main class="main">
        <div class="view">
          <svg class="scene" viewBox="260 139 1629 639" role="img" aria-label="Casting part">
            <defs>
              <filter id="b3" x="-30%" y="-30%" width="160%" height="160%"><feGaussianBlur stdDeviation="4" /></filter>
              <filter id="b8" x="-40%" y="-40%" width="180%" height="180%"><feGaussianBlur stdDeviation="9" /></filter>
              <filter id="grain" x="0" y="0" width="100%" height="100%"><feTurbulence type="fractalNoise" baseFrequency=".06 .25" numOctaves="2" seed="4" /><feColorMatrix values="0 0 0 0 .1  0 0 0 0 .2  0 0 0 0 .4  .5 0 0 0 -.18" /><feComposite in2="SourceGraphic" operator="in" /></filter>
              <linearGradient id="top" gradientUnits="userSpaceOnUse" x1="820" y1="330" x2="1230" y2="660"><stop offset="0" stop-color="#77a6e0" /><stop offset=".6" stop-color="#7bade7" /><stop offset="1" stop-color="#80b2ed" /></linearGradient>
              <linearGradient id="cyl1" gradientUnits="userSpaceOnUse" x1="1010" y1="295" x2="988" y2="368"><stop offset="0" stop-color="#5b81b3" /><stop offset=".22" stop-color="#6e9cd5" /><stop offset=".7" stop-color="#86b8f6" /><stop offset="1" stop-color="#83b4f0" /></linearGradient>
              <linearGradient id="boss" gradientUnits="userSpaceOnUse" x1="868" y1="400" x2="965" y2="415"><stop offset="0" stop-color="#68696f" /><stop offset=".5" stop-color="#2c2c2e" /><stop offset="1" stop-color="#1a1a1b" /></linearGradient>
              <linearGradient id="ring" gradientUnits="userSpaceOnUse" x1="850" y1="440" x2="965" y2="455"><stop offset="0" stop-color="#a9abba" /><stop offset=".25" stop-color="#d3d4df" /><stop offset=".55" stop-color="#f0f0f8" /><stop offset="1" stop-color="#a0a1ab" /></linearGradient>
              <linearGradient id="ringv" gradientUnits="userSpaceOnUse" x1="910" y1="442" x2="906" y2="477"><stop offset="0" stop-color="#444549" stop-opacity=".9" /><stop offset=".5" stop-color="#e9eaf3" stop-opacity="0" /><stop offset="1" stop-color="#989aa8" stop-opacity=".8" /></linearGradient>
              <linearGradient id="bar" gradientUnits="userSpaceOnUse" x1="1112" y1="310" x2="1138" y2="357"><stop offset="0" stop-color="#8f909a" /><stop offset=".35" stop-color="#a7a9b6" /><stop offset="1" stop-color="#4f5054" /></linearGradient>
              <linearGradient id="bend" gradientUnits="userSpaceOnUse" x1="1262" y1="286" x2="1228" y2="320"><stop offset="0" stop-color="#4a4b4f" /><stop offset=".45" stop-color="#7d7e86" /><stop offset=".65" stop-color="#85868e" /><stop offset="1" stop-color="#4c4d51" /></linearGradient>
              <radialGradient id="ballc" gradientUnits="userSpaceOnUse" cx="1003" cy="393" r="46"><stop offset="0" stop-color="#fff" /><stop offset=".22" stop-color="#dcdce4" /><stop offset=".6" stop-color="#8c8d96" /><stop offset="1" stop-color="#55565a" /></radialGradient>
              <linearGradient id="pil" gradientUnits="userSpaceOnUse" x1="970" y1="500" x2="1020" y2="500"><stop offset="0" stop-color="#3f4044" /><stop offset=".5" stop-color="#4b4c50" /><stop offset=".75" stop-color="#5b5c61" /><stop offset="1" stop-color="#38393b" /></linearGradient>
              <linearGradient id="cyl2" gradientUnits="userSpaceOnUse" x1="1250" y1="385" x2="1160" y2="530"><stop offset="0" stop-color="#6690c8" /><stop offset=".2" stop-color="#78a8e4" /><stop offset=".5" stop-color="#90c3ff" /><stop offset=".75" stop-color="#6a95ce" /><stop offset="1" stop-color="#4f71a6" /></linearGradient>
              <linearGradient id="lip" gradientUnits="userSpaceOnUse" x1="1228" y1="455" x2="1248" y2="466"><stop offset="0" stop-color="#92939c" /><stop offset=".4" stop-color="#c3c4ce" /><stop offset="1" stop-color="#404144" /></linearGradient>
              <linearGradient id="arch" gradientUnits="userSpaceOnUse" x1="1180" y1="342" x2="1195" y2="372"><stop offset="0" stop-color="#55565b" /><stop offset="1" stop-color="#b3b4bf" /></linearGradient>
            </defs>
            <path d="M654 476 1209 699 1208 719 648 548z" fill="#505156" stroke="#111" />
            <path d="M1209 699 1253 647 1283 603 1310 560 1333 523 1367 477 1400 438 1433 400 1467 363 1462 428 1208 719z" fill="#090920" stroke="#0a0a14" />
            <path d="M903 242C888 262 874 277 862 290 845 309 828 328 803 350 776 374 748 391 713 415 690 436 675 453 654 476L710 500 840 551 1010 620 1100 653 1209 699 1253 647 1283 603 1310 560 1333 523 1367 477 1400 438 1433 400 1467 363 1413 353 1273 321 1145 293 1000 263z" fill="url(#top)" stroke="#15181c" />
            <path d="M903 242C888 262 874 277 862 290 845 309 828 328 803 350 776 374 748 391 713 415 690 436 675 453 654 476L710 500 840 551 1010 620 1100 653 1209 699 1253 647 1283 603 1310 560 1333 523 1367 477 1400 438 1433 400 1467 363 1413 353 1273 321 1145 293 1000 263z" filter="url(#grain)" opacity=".35" />
            <path d="M912 243 1000 262 1145 292M1273 320 1413 352 1455 360" fill="none" stroke="#6f9fdb" stroke-width="3" stroke-dasharray="7 9 4 6 10 12 3 15" />
            <path d="M662 478 710 498 840 549 1010 618 1100 651 1206 695" fill="none" stroke="#b3b6c6" stroke-width="2" stroke-dasharray="26 3 14 8 40 4 9 2" />
            <path d="M1207 696 1251 645 1281 601 1308 558 1331 521 1365 475 1398 436 1460 367" fill="none" stroke="#b7b9c9" stroke-width="3" stroke-dasharray="60 2 14 6 40 4 9 9" />
            <path d="M654 476 710 500 840 551 1010 620 1100 653 1209 699 1253 647 1283 603 1310 560 1333 523 1367 477 1400 438 1467 363" fill="none" stroke="#111" />
            <path d="M658 474 673 457 694 436 713 418 736 402" fill="none" stroke="#b0b3c2" stroke-width="3" />

            <!-- soft shading around the ribs -->
            <path d="M1018 566C1050 556 1095 535 1105 510L1200 545 1226 540 1300 440 1290 425 1225 525 1090 500 1060 470z" fill="#39568c" opacity=".8" filter="url(#b8)" />
            <path d="M930 545Q960 600 1010 580" fill="none" stroke="#8fc2ff" stroke-width="12" filter="url(#b3)" opacity=".8" />
            <path d="M955 545Q975 575 1018 566L1080 528" fill="none" stroke="#2e4778" stroke-width="12" filter="url(#b3)" opacity=".75" />
            <path d="M1098 525Q1160 545 1215 545" fill="none" stroke="#90c3ff" stroke-width="8" filter="url(#b3)" />

            <!-- rear half cylinder -->
            <path d="M870 350 879 317 900 287Q918 276 940 276L950 279 1093 320 1014 365 992 372Q980 355 957 349z" fill="url(#cyl1)" />
            <path d="M900 287Q918 274 940 276L1093 320" fill="none" stroke="#5379ab" opacity=".8" />
            <path d="M795 392 850 367 862 345 878 318 879 325 868 349 880 350 868 424 866 434 880 444 847 441 842 436z" fill="#a5a7b2" />
            <path d="M843 387 862 345 878 318 880 350 860 400z" fill="#9fa0aa" />
            <path d="M843 387Q820 394 822 403 824 412 850 423L862 424 868 405 860 400z" fill="#b9bac9" />
            <path d="M937 279Q905 295 877 340 862 368 853 397L840 419M843 387Q818 394 822 405 830 418 850 423H861M843 387Q843 398 866 406M872 382Q862 395 858 407L850 423Q842 430 843 440" fill="none" stroke="#111" />
            <path d="M880 444 866 462 900 479 962 475 960 430 866 424z" fill="url(#ring)" />
            <path d="M865 424Q850 424 844 434 846 446 880 445L900 448z" fill="#bcbdcb" />
            <path d="M862 462 882 444 943 447 965 450 960 473 917 477 893 473z" fill="url(#ringv)" />
            <path d="M862 462Q892 476 917 477L960 472 955 536Q950 546 933 545L923 537 945 520 947 507 942 497 927 495 907 513 897 513Q880 503 870 490 860 478 862 462z" fill="#b0b2c2" />
            <path d="M862 462Q892 476 917 477L960 471M931 544Q936 530 954 523M940 532 952 535" fill="none" stroke="#111" />
            <path d="M957 349Q980 353 991 371L985 385 966 392z" fill="#a7abb9" />
            <path d="M957 354 970 372 972 390 985 385 976 362 990 370 980 380" fill="#6d9bd6" />
            <path d="M957 348Q982 354 991 373" fill="none" stroke="#111" />
            <path d="M963 392 943 446 963 450 970 392z" fill="#6b6c73" />
            <path d="M878 360 865 422Q878 444 925 446L943 446 963 397V363Q950 385 917 385 885 382 878 360z" fill="url(#boss)" />
            <path d="M892 402 927 397 963 375V393L927 417 887 437z" fill="#202f59" />
            <path d="M878 360 865 422Q878 444 925 446L943 446 963 397V373M943 446Q944 465 952 472M943 446 963 449" fill="none" stroke="#111" />
            <ellipse cx="917" cy="355" rx="39" ry="31" fill="#dcdeec" stroke="#111" />
            <path d="M897 336 903 331 908 330 912 335 922 335 928 333 937 334 944 341 948 346 949 356 944 366 945 370 938 374 930 375 922 380 912 377 903 377 896 372 891 368 887 358 888 350 892 341z" fill="#86b8f5" />

            <!-- rib -->
            <path d="M1036 404 1213 320Q1240 308 1257 323 1268 334 1272 350L1242 372Q1232 340 1200 339 1165 345 1123 403 1100 445 1083 503L1070 518Q1045 545 1017 556L1022 430Q1023 412 1036 404z" fill="#2e2f32" />
            <path d="M1018 550 1022 500 1026 462 1036 455 1044 458 1060 447 1070 452 1086 450 1098 444 1083 503 1070 518Q1045 545 1017 556z" fill="#171e42" />
            <path d="M1000 368 1033 350 1090 320 1180 277Q1198 271 1217 273L1213 320 1036 404 1010 420z" fill="url(#bar)" />
            <path d="M1192 279Q1207 270 1225 274 1272 290 1278 343L1272 350Q1268 334 1257 323 1240 308 1213 320 1212 295 1186 281z" fill="url(#bend)" />
            <path d="M988 376 1000 367 1090 320 1180 277Q1198 271 1212 274L1197 281 1192 287 1167 297 1090 334 1027 366 1005 376z" fill="#6993c9" />
            <path d="M968 420Q965 390 990 373L1010 367Q1036 380 1035 404 1023 412 1022 430 1000 438 977 430z" fill="url(#ballc)" />
            <path d="M968 420Q970 382 1010 366 990 390 981 425L975 415z" fill="#6f9cd6" opacity=".9" />
            <path d="M967 415 963 450 954 540 963 530 970 520 982 433z" fill="#75767e" />
            <path d="M976 425 982 433 970 520 962 534 972 470z" fill="#3a5588" />
            <path d="M981 430Q1000 438 1022 430L1016 552Q1013 566 990 568 972 564 970 533z" fill="url(#pil)" />
            <path d="M966 413Q972 432 996 435 1014 435 1022 430L1016 556M1010 367Q1034 376 1035 404M1186 281Q1214 292 1213 320M972 559Q992 567 1013 561M967 430 953 540M1036 404 1213 320Q1240 308 1257 323 1268 334 1272 350L1278 343M1036 404Q1022 412 1022 430" fill="none" stroke="#0d0d0d" />

            <!-- front half cylinder -->
            <path d="M1083 503Q1098 440 1123 403 1165 340 1200 339 1232 340 1240 378L1200 366 1110 440z" fill="url(#arch)" />
            <path d="M1085 505Q1092 450 1110 428L1120 413 1126 414 1133 402 1141 396 1146 390 1153 380 1162 376 1166 371 1180 367 1190 368 1207 360 1227 367 1243 380 1277 400Q1250 415 1230 450 1211 485 1203 527L1150 520 1097 512z" fill="url(#cyl2)" />
            <path d="M1242 374 1272 350 1278 343Q1284 352 1288 355L1287 367 1262 374 1245 378z" fill="#9c9da6" />
            <path d="M1204 499 1215 490 1212 510zM1166 512l14 4 M1193 508l9 1M1184 516l14 5" fill="#9c9ca6" stroke="#9c9ca6" stroke-width="2" />
            <path d="M1225 515Q1238 470 1262 446L1294 420 1280 450 1250 490z" fill="#1b2850" filter="url(#b3)" opacity=".8" />
            <path d="M1295 418 1287 418Q1262 420 1245 455L1230 500 1224 515 1236 490Q1250 450 1290 424z" fill="#202124" />
            <path d="M1203 527Q1215 440 1263 407 1275 398 1287 405L1295 418 1283 418Q1262 424 1250 450 1234 480 1227 508L1213 528z" fill="url(#lip)" />
            <path d="M1242 373 1272 350Q1272 365 1288 373M1239 378Q1232 340 1200 339 1160 345 1123 403 1107 432 1098 458M1263 407Q1275 398 1287 405L1295 418 1283 418Q1262 424 1250 450 1234 480 1227 508L1215 526" fill="none" stroke="#111" />
            <path d="M1203 527Q1214 445 1263 407" fill="none" stroke="#111" stroke-dasharray="34 5 12 4" />
            <path d="M1170 387Q1200 362 1225 370M1098 458Q1086 480 1084 502M1103 532 1200 550Q1214 551 1223 547M1280 335Q1300 345 1298 360 1292 375 1278 378M1296 413 1314 424" fill="none" stroke="#15233d" stroke-dasharray="2 4" opacity=".8" />
            <path d="M965 576l3 0 1 3-3 2zM973 587l10 1" fill="#fff" stroke="#1c2f55" />
            <path d="M1182 576h4M1181 591h4M1222 605h4M1088 594h4M1023 320h4M997 327h3M930 298h2M923 264h3M1125 454h3" stroke="#b9bccb" stroke-width="2" />

            <!-- axes and scale bar -->
            <path d="M299 738 279 732" stroke="#e01010" stroke-width="2" /><path d="M299 738 300 720" stroke="#1010e0" stroke-width="2" /><path d="M299 738 289 749" stroke="#10d010" stroke-width="2" />
            <g class="axis"><text x="272" y="735" fill="#b01818">X</text><text x="296" y="721" fill="#2020c0">Z</text><text x="284" y="754" fill="#109010">Y</text></g>
            <path d="M279.500 754.500h61v7h-61z" fill="#fff" stroke="#333" /><path d="M279 758h62v4h-62z" fill="#333" />
            <text class="mm" x="344" y="760">25 mm</text>
            <path d="M1877 142l7 7" stroke="#777" />
          </svg>
          <div class="vtools">
            <template v-for="(v, k) in viewTools" :key="k">
              <i v-if="v === '>'" class="dd"></i>
              <i v-else-if="v === '|'" class="vsep"></i>
              <button v-else class="flat" :class="{ on: v === 'rsel' }" :aria-label="v"><Ico :n="v" w="17" /></button>
            </template>
          </div>
        </div>

        <div class="vtabs">
          <button class="flat arrow" aria-label="Previous"><svg width="6" height="10"><path d="M5 .5v9L1 5z" fill="none" stroke="#666" /></svg></button>
          <button class="vt mv">Model View</button><button class="vt sup">Support</button>
          <div class="vctl">
            <button class="flat" aria-label="Next"><svg width="8" height="10"><path d="M1.500 1v8l4-4z" fill="none" stroke="#666" /></svg></button>
            <button class="flat" aria-label="Close view"><svg width="10" height="10"><path d="M1 1l8 8M9 1 1 9" stroke="#666" stroke-width="2" /></svg></button>
            <button class="boxed" aria-label="Forward"><svg width="10" height="10"><path d="M1 3h4V0l5 5-5 5V7H1z" fill="#333" /></svg></button>
            <button class="boxed" aria-label="List"><svg width="10" height="10"><path d="M0 3h10L5 8z" fill="#333" /></svg></button>
          </div>
        </div>

        <section class="errs">
          <div class="phead"><span>Error List</span><button class="flat" aria-label="Pin"><Ico n="pin" w="13" /></button><button class="flat" aria-label="Close panel"><Ico n="close" w="13" /></button></div>
          <div class="ptabs"><button><Ico n="console" />Console</button><button class="cur"><Ico n="error" w="14" />Error List</button></div>
          <form class="opts" @submit.prevent>
            <label class="o1"><input v-model="rebuild" type="checkbox" />Show Rebuild Failure</label>
            <label class="o2"><input v-model="live" type="checkbox" />Show LiveTransfer(TM) Failure</label>
            <label class="o3">CAD Compatibility
              <span class="sel"><select><option>SolidWorks</option></select><i class="dd"></i></span>
            </label>
          </form>
          <div class="tblwrap">
            <div class="hstrip"></div>
            <table>
              <thead><tr><th class="c1">No.</th><th class="c2">Feature Name</th><th class="c3">Type</th><th class="c4">Description</th></tr></thead>
              <tbody>
                <tr v-for="e in errors" :key="e[0]"><td class="num">{{ e[0] }}</td><td><div class="fn"><Ico :n="e[1]" w="15" /><span>{{ e[2] }}</span></div></td><td class="ty"><Ico n="sw" w="14" /></td><td>{{ e[3] }}</td></tr>
              </tbody>
            </table>
          </div>
        </section>
      </main>

      <nav class="rail">
        <button><Ico n="props" w="14" /><span>Properties</span></button>
        <button class="long"><Ico n="accuracy" w="14" /><span>Accuracy Analyzer(TM)</span></button>
      </nav>
    </div>

    <div class="bottom">
      <i class="grip"></i>
      <button class="flat crop" aria-label="Filter"><Ico n="crop" w="16" /></button>
      <span class="sel dim"><select aria-label="Size"><option>Auto</option></select><i class="dd"></i></span>
      <span class="sel dim white"><select aria-label="Unit"><option>Auto</option></select><i class="dd"></i></span>
      <i class="grip g2"></i>
      <button v-for="s in showTools" :key="s" class="flat bt" :class="{ on: !plain.includes(s) }" :aria-label="s"><Ico :n="s" /></button>
      <i class="dd"></i><i class="grip g3"></i>
      <button v-for="s in pickTools" :key="s" class="flat bt" :aria-label="s"><Ico :n="s" /></button>
      <i class="bsep"></i>
      <button class="flat bt" aria-label="Copy"><Ico n="copy" /></button>
      <i class="dd"></i><i class="grip g3"></i>
      <button v-for="s in measure" :key="s" class="flat bt" :aria-label="s"><Ico :n="s" w="17" /></button>
      <i class="dd"></i>
    </div>

    <footer class="status">
      <span>Ready</span>
      <div class="timer">0: 0: 0.11<button class="flat" aria-label="Timer menu"><i class="dd"></i></button></div>
      <i class="mem"></i><i class="led"></i>
    </footer>
  </div>
</template>

<style>
body { margin: 0; background: #f0f0f0; }
.ico { display: block; flex: none; overflow: visible; }
</style>

<style scoped>
* { box-sizing: border-box; }
.app { min-height: 100vh; display: flex; flex-direction: column; background: #f0f0f0; color: #1e1e1e; font: 11px/14px "Open Sans", "Noto Sans", sans-serif; overflow: hidden; }
.defs { position: absolute; }
button { font: inherit; color: inherit; border: 0; padding: 0; margin: 0; background: none; display: flex; align-items: center; white-space: nowrap; }
ul { list-style: none; margin: 0; padding: 0; }
i { display: block; flex: none; }
.flat { justify-content: center; }
.dd { width: 5px; height: 3px; background: #777; clip-path: polygon(0 0, 100% 0, 50% 100%); }

.titlebar { display: flex; align-items: center; height: 25px; padding: 0 12px 2px 2px; }
.logo { width: 16px; height: 16px; margin-right: 9px; background: #c3242a; color: #fff; font-size: 10px; font-weight: 700; line-height: 15px; text-align: center; }
.titlebar > .flat { width: 22px; height: 22px; }
.titlebar > .more { width: 14px; flex-direction: column; gap: 2px; }
.more i { width: 5px; height: 2px; background: #8c2226; }
.more b { width: 5px; height: 3px; background: #8c2226; clip-path: polygon(0 0, 100% 0, 50% 100%); }
.titlebar h1 { flex: 1; margin: 0 8px 0 0; padding-right: 0; text-align: center; font: inherit; color: #4a4a4a; }
.titlebar h1 { margin-left: 0; }
.winctl { display: flex; gap: 24px; }

.tabs { display: flex; height: 22px; border-bottom: 1px solid #c3c3c3; }
.tabs button { justify-content: center; height: 21px; }
.tabs .menu { width: 58px; margin-right: 4px; background: #c72a2d; color: #fff; }
.tabs .cur { height: 22px; background: #fafafa; color: #b3202a; border: 1px solid #c3c3c3; border-bottom: 0; }

.ribbon { display: flex; background: linear-gradient(#fafafa 71px, #c3c3c3 71px 72px, #e7e8ea 72px); border-bottom: 1px solid #7e8184; height: 92px; }
.group { position: relative; flex: none; }
.group:not(.rest)::after { content: ""; position: absolute; right: 0; top: 2px; bottom: 3px; width: 1px; background: #c3c3c3; }
.rest { flex: 1; border-right: 1px solid #c3c3c3; }
.tools { display: flex; height: 71px; padding: 6px 0 0 6px; }
.group:first-child .tools { padding-left: 8px; }
.gname { margin-top: 1px; height: 17px; line-height: 16px; text-align: center; }
.big { flex-direction: column; flex: none; height: 64px; }
.big span { margin-top: 4px; line-height: 13px; white-space: pre; text-align: center; }
.col { display: flex; flex-direction: column; flex: none; margin-top: -2px; padding-left: 3px; }
.small { height: 22px; gap: 3px; }
.rsep { width: 1px; height: 57px; margin: 2px 4px 0 1px; background: #c3c3c3; }

.work { display: flex; flex: 1; }
.side { width: 256px; margin-right: 4px; background: #fff; display: flex; flex-direction: column; flex: none; }
.phead { display: flex; align-items: center; height: 21px; padding: 0 2px 0 4px; background: #8f9396; color: #fff; }
.phead span { flex: 1; }
.phead .flat { width: 18px; height: 19px; }
.ptabs { display: flex; align-items: flex-end; height: 25px; background: #f0f0f0; border-bottom: 1px solid #dcdcdc; }
.ptabs button { height: 21px; padding: 0 5px 2px 6px; gap: 2px; margin-bottom: -1px; border: 1px solid transparent; border-bottom: 0; }
.ptabs button.cur { background: #fff; border-color: #c3c3c3; }
.side .ptabs .cur { padding-left: 3px; padding-right: 3px; }
.sect { height: 26px; padding-left: 23px; line-height: 26px; border-bottom: 1px solid #bababa; color: #000; }
.sect.short { height: 24px; line-height: 22px; }
.ftree { display: flex; }
.ftree ul { flex: 1; }
li { display: flex; align-items: center; height: 20px; padding: 0 0 1px 7px; white-space: nowrap; }
li label { display: flex; align-items: center; }
li.root { padding-left: 22px; }
li.dark { color: #000; }
.slot { width: 21px; flex: none; }
.exp { width: 9px; height: 9px; border: 1px solid #8f8f8f; border-radius: 1px; color: #274a9c; background: #f8f8f8; font: 9px/7px "DejaVu Sans", sans-serif; justify-content: center; }
.noexp { width: 9px; }
.bul { width: 8px; height: 8px; margin: 0 7px; border-radius: 50%; background: #959595; }
.scroll { width: 17px; height: 379px; display: flex; flex-direction: column; background: #e5e5e5; border: 1px solid #dadada; border-top: 0; }
.scroll button { height: 17px; justify-content: center; background: #fafafa; border-bottom: 1px solid #dadada; }
.scroll .thumb { height: 167px; background: #fafafa; border-bottom: 1px solid #dadada; }
.scroll .down { margin-top: auto; border-top: 1px solid #dadada; }
.mtree { flex: 1; }
.mtree li { font-weight: 700; }
.mtree li.sub { font-weight: 400; padding-left: 41px; }
.mtree li.def { padding-left: 3px; color: #000; }
.def i { width: 12px; height: 12px; margin-right: 9px; background: #d3d3d3; }
.vis { position: relative; width: 12px; height: 12px; margin: 0 4px 0 6px; }
.sub .vis { margin-left: 0; }
.vis input { appearance: none; display: block; margin: 0; width: 12px; height: 12px; border: 1px solid #999; background: #fff; }
.vis svg { position: absolute; left: 0; top: 0; pointer-events: none; }

.main { flex: 1; min-width: 0; display: flex; flex-direction: column; }
.view { flex: 1; position: relative; background: #fff; min-height: 400px; }
.scene { position: absolute; left: 0; top: 0; width: 100%; height: 100%; }
.axis { font: 12px "Liberation Sans", sans-serif; }
.mm { font: 11px "Liberation Sans", sans-serif; fill: #222; }
.vtools { position: absolute; top: 0; left: 0; right: 0; margin: 0 auto; width: max-content; height: 28px; padding: 0 2px 0 3px; display: flex; align-items: center; background: #d0d2d7; border: 1px solid #7e8184; border-top: 0; }
.vtools .flat { width: 26px; height: 20px; }
.vtools .flat.on { width: 24px; margin: 0 1px; background: #e3a5a7; }
.vtools .dd { margin: 10px 4px 0 2px; }
.vsep { width: 1px; height: 20px; margin: 0 2px 0 5px; background: #b9bbc0; }

.vtabs { display: flex; height: 22px; border-top: 1px solid #e0e0e0; border-bottom: 4px solid #e0e0e0; align-items: stretch; color: #000; }
.arrow { width: 14px; }
.vt { padding: 0 20px 1px 12px; }
.mv { background: #d5e6ff; clip-path: polygon(0 0, 100% 0, calc(100% - 8px) 100%, 9px 100%); }
.sup { margin-left: -3px; padding: 0 18px 1px 7px; background: #fff083; clip-path: polygon(5px 0, 100% 0, calc(100% - 10px) 100%, 5px 100%, 0 80%); }
.vctl { margin-left: auto; display: flex; align-items: center; gap: 4px; padding-right: 5px; }
.vctl .flat { width: 14px; }
.boxed { width: 14px; height: 14px; justify-content: center; background: #fff; border: 1px solid #c0c0c0; }

.errs { background: #fafafa; min-height: 193px; }
.errs .ptabs button { padding-left: 3px; }
.errs .ptabs .cur { padding-left: 5px; gap: 3px; }
.opts { display: flex; align-items: center; height: 30px; font: 12px/16px "Liberation Sans", sans-serif; color: #111; white-space: nowrap; padding-left: 13px; }
.opts label { display: flex; align-items: center; }
.opts input { appearance: none; width: 11px; height: 11px; margin: 0 3px 0 0; border: 1px solid #aaa; background: #fff; }
.opts input:checked { background: no-repeat center/9px url("data:image/svg+xml,%3Csvg xmlns='http://www.w3.org/2000/svg' viewBox='0 0 9 9'%3E%3Cpath d='M1 4l2.500 3L8 1.500' fill='none' stroke='%23444' stroke-width='1.500'/%3E%3C/svg%3E") #fff; }
.o1 { width: 163px; }
.o2 { width: 230px; }
.o3 { gap: 14px; }
.sel { position: relative; display: flex; }
.sel select { appearance: none; width: 122px; height: 23px; padding: 0 4px; border: 1px solid #b4b8bd; border-radius: 0; background: #fff; font: inherit; color: inherit; }
.sel .dd { position: absolute; right: 7px; top: 10px; pointer-events: none; }
.tblwrap { position: relative; }
.hstrip { position: absolute; left: 0; right: 0; top: 0; height: 21px; background: #f0f0f0; border-bottom: 1px solid #a5a5a5; }
table { position: relative; border-collapse: separate; border-spacing: 0; table-layout: fixed; width: 577px; }
th { height: 21px; padding: 0 6px; font-weight: 400; text-align: left; border-bottom: 1px solid #a5a5a5; border-right: 1px solid #d5d5d5; }
.c1 { width: 62px; padding-left: 22px; }
.c2 { width: 95px; }
.c3 { width: 53px; padding-left: 5px; }
.c4 { width: 367px; }
td { height: 17px; padding: 0 3px 1px; background: #fff; border-bottom: 1px solid #ececec; border-right: 1px solid #ececec; white-space: nowrap; line-height: 14px; vertical-align: top; color: #000; }
td.num { text-align: right; }
.fn { display: flex; align-items: center; height: 15px; margin-right: -3px; }
.fn span { flex: 1; padding-left: 4px; margin-top: -1px; text-align: center; }
.ty .ico { margin: 0 auto; }

.rail { width: 31px; display: flex; flex-direction: column; gap: 5px; padding-top: 7px; flex: none; }
.rail button { writing-mode: vertical-rl; height: 74px; border-right: 6px solid #c4c4c4; gap: 4px; font: 12px/14px "Liberation Sans", sans-serif; justify-content: flex-start; padding: 1px 4px 0 0; }
.rail .long { height: 144px; }

.bottom { display: flex; align-items: center; height: 28px; padding: 0 0 2px 4px; }
.grip { width: 2px; height: 20px; background: repeating-linear-gradient(#c4c4c4 0 2px, transparent 2px 4px); }
.crop { width: 22px; margin: 0 5px; }
.dim { margin-right: 5px; color: #6d6d6d; }
.dim select { width: 46px; height: 22px; background: #f0f0f0; border-color: #a9b0b9; font-size: 12px; }
.dim .dd { right: 5px; background: #aaa; }
.dim.white select { padding: 0 16px 0 3px; background: linear-gradient(#fff, #fff) 2px 4px/24px 14px no-repeat #f0f0f0; }
.grip.g2 { margin: 0 5px 0 3px; }
.grip.g3 { margin: 0 4px 0 9px; }
.bt { width: 24px; height: 20px; margin-right: 2px; flex: none; }
.bt.on { background: #e3a5a7; }
.bottom .dd { margin: 8px 0 0 2px; }
.bottom .sel .dd { margin: 0; }
.bsep { width: 1px; height: 20px; margin: 0 3px; background: #c3c3c3; }

.status { display: flex; align-items: center; height: 19px; padding: 0 10px 0 15px; gap: 2px; background: #8f9396; color: #fff; font: 11px/14px "Liberation Sans", sans-serif; }
.status span { flex: 1; }
.timer { display: flex; align-items: center; height: 15px; padding-left: 14px; gap: 4px; border: 1px solid #a3a6a8; }
.timer .flat { width: 10px; height: 13px; background: #f0f0f0; }
.timer .dd { background: #999; }
.mem { width: 33px; height: 15px; background: linear-gradient(90deg, #1d6b25 3px, #000 3px); border: 1px solid #a3a6a8; }
.led { width: 15px; height: 15px; background: linear-gradient(135deg, #3cb549 50%, #13601c); border: 1px solid #a3a6a8; }
</style>
